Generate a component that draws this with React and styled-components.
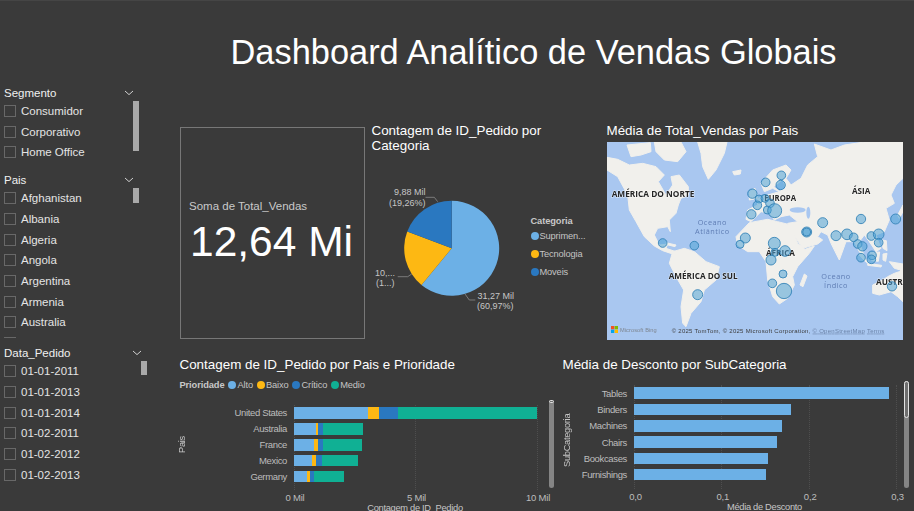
import React from "react";
import styled, { createGlobalStyle } from "styled-components";

const BLUE = "#6cb0e6";
const YELLOW = "#fdb813";
const NAVY = "#2a78c0";
const TEAL = "#10b094";

const GlobalStyle = createGlobalStyle`
  html, body {
    margin: 0;
    padding: 0;
    background: #3a3a3a;
  }
  * {
    box-sizing: border-box;
  }
  body, text {
    font-family: "Liberation Sans", Arial, sans-serif;
  }
`;

const Page = styled.div`
  width: 914px;
  height: 511px;
  overflow: hidden;
  background: #3a3a3a;
  border-top: 1px solid #454545;
  display: grid;
  grid-template-columns: 170px 1fr;
`;

/* ---- slicers ---- */
const Sidebar = styled.aside`
  padding: 82.5px 0 0 4px;
  display: flex;
  flex-direction: column;
`;

const SlicerBox = styled.section`
  position: relative;
  width: ${(p) => p.$width}px;
  margin-bottom: ${(p) => p.$gap}px;
`;

const SlicerHead = styled.div`
  height: 18.5px;
  margin-bottom: -1.4px;
  display: flex;
  align-items: center;
  justify-content: space-between;
  font-size: 11.5px;
  color: #f0f0f0;
  padding-right: 5px;
`;

const SlicerList = styled.div`
  height: ${(p) => p.$height}px;
  overflow: hidden;
`;

const SlicerItem = styled.div`
  height: 20.7px;
  display: flex;
  align-items: center;
  gap: 5px;
  font-size: 11.5px;
  color: #e4e4e4;
`;

const Check = styled.span`
  width: 12px;
  height: 12px;
  border: 1px solid #686868;
  flex: none;
`;

const SlicerScroll = styled.div`
  position: absolute;
  right: 0;
  top: ${(p) => p.$top}px;
  width: 6px;
  height: ${(p) => p.$height}px;
  background: #a9a9a9;
`;

const Slicer = ({ title, items, width, gap, listHeight, thumbTop, thumbHeight }) => (
  <SlicerBox $width={width} $gap={gap}>
    <SlicerHead>
      {title}
      <svg width="10" height="6" viewBox="0 0 10 6">
        <path d="M1 1 L5 4.6 L9 1" fill="none" stroke="#d0d0d0" strokeWidth="1" />
      </svg>
    </SlicerHead>
    <SlicerList $height={listHeight}>
      {items.map((item, i) => (
        <SlicerItem key={i}>
          <Check />
          {item}
        </SlicerItem>
      ))}
    </SlicerList>
    <SlicerScroll $top={thumbTop} $height={thumbHeight} />
  </SlicerBox>
);

/* ---- main column ---- */
const Main = styled.main`
  display: flex;
  flex-direction: column;
  padding-left: 9.5px;
`;

const Header = styled.header`
  height: 122px;
  padding: 32px 0 0 51px;
`;

const PageTitle = styled.h1`
  margin: 0;
  font-size: 34.4px;
  line-height: 38px;
  font-weight: 400;
  color: #fff;
  white-space: nowrap;
`;

const TopRow = styled.div`
  height: 217px;
  display: grid;
  grid-template-columns: 185px 228px 296px;
  column-gap: 7px;
  margin-bottom: 17px;
`;

const BottomRow = styled.div`
  display: grid;
  grid-template-columns: 383px 1fr;
`;

const CardTitle = styled.h2`
  margin: 0;
  font-size: 13.4px;
  line-height: 15px;
  font-weight: 400;
  color: #fff;
  white-space: nowrap;
`;

const KpiCard = styled.div`
  margin-top: 4px;
  height: 212px;
  border: 1px solid #777;
  padding: 71px 0 0 8.5px;
`;

const KpiLabel = styled.div`
  font-size: 11.5px;
  line-height: 14px;
  color: #c9c9c9;
`;

const KpiValue = styled.div`
  margin: 4px 0 0 1px;
  font-size: 42.5px;
  line-height: 50px;
  color: #fff;
  white-space: nowrap;
`;

const PieCard = styled.div`
  display: flex;
  flex-direction: column;
`;

const PieRow = styled.div`
  display: flex;
`;

const PieLegend = styled.div`
  margin: 62px 0 0 4px;
  display: flex;
  flex-direction: column;
  gap: 6px;
`;

const LegendTitle = styled.div`
  margin-bottom: ${(p) => p.$under || 0}px;
  font-size: 9.3px;
  line-height: 12px;
  font-weight: 700;
  color: #c8c8c8;
  white-space: nowrap;
  letter-spacing: -0.1px;
`;

const LegendItem = styled.div`
  display: flex;
  align-items: center;
  gap: 1px;
  font-size: 9.3px;
  line-height: 12px;
  color: #c4c4c4;
  white-space: nowrap;
  letter-spacing: -0.15px;
`;

const Dot = styled.span`
  width: 8px;
  height: 8px;
  border-radius: 50%;
  background: ${(p) => p.$color};
  flex: none;
`;

const PieText = styled.text`
  font-size: 9px;
  fill: #c6c6c6;
`;

const MapCard = styled.div`
  display: flex;
  flex-direction: column;
  gap: 3.5px;
`;

const MapFrame = styled.svg`
  display: block;
  width: 296px;
  height: 198px;
  filter: blur(0.35px);
`;

const PlaceLabel = styled.text`
  font-family: "Open Sans", sans-serif;
  font-weight: 700;
  font-size: 25px;
  fill: #262626;
  stroke: #fff;
  stroke-width: 3px;
  stroke-opacity: 0.6;
  paint-order: stroke;
`;

const OceanLabel = styled.text`
  font-family: "Open Sans", sans-serif;
  font-size: 22px;
  letter-spacing: 1.5px;
  fill: #5f7db4;
  text-anchor: middle;
`;

const Credit = styled.text`
  font-size: 18px;
  fill: #3c3c3c;
`;

const BingMark = styled.text`
  font-size: 17px;
  fill: #7d8590;
`;

const CreditLink = styled.tspan`
  fill: #6b83a8;
  text-decoration: underline;
`;

/* ---- bar charts ---- */
const ChartCard = styled.section`
  position: relative;
  height: 156px;
`;

const ChartLegend = styled.div`
  margin-top: 6px;
  height: 14px;
  display: flex;
  align-items: center;
  gap: 4px;
`;

const ChartBody = styled.div`
  margin-top: ${(p) => p.$top}px;
  display: flex;
`;

const AxisTitle = styled.div`
  writing-mode: vertical-rl;
  transform: rotate(180deg);
  align-self: flex-start;
  height: ${(p) => p.$height}px;
  margin-left: ${(p) => p.$left}px;
  width: 10px;
  text-align: center;
  font-size: 9.3px;
  line-height: 10px;
  color: #c6c6c6;
  white-space: nowrap;
  letter-spacing: -0.3px;
`;

const Labels = styled.div`
  width: ${(p) => p.$width}px;
  margin-right: 6.5px;
`;

const BarLabel = styled.div`
  height: ${(p) => p.$pitch}px;
  display: flex;
  align-items: center;
  justify-content: flex-end;
  font-size: 9.5px;
  letter-spacing: -0.35px;
  color: #bdbdbd;
  white-space: nowrap;
`;

const Plot = styled.div`
  position: relative;
  width: ${(p) => p.$width}px;
`;

const GridLine = styled.span`
  position: absolute;
  top: 0;
  bottom: 24px;
  width: 0;
  border-left: 1px dotted #4e4e4e;
`;

const BarRow = styled.div`
  position: relative;
  height: ${(p) => p.$pitch}px;
  display: flex;
  align-items: center;
`;

const Segment = styled.span`
  height: 11.6px;
  background: ${(p) => p.$color};
`;

const Ticks = styled.div`
  margin: ${(p) => p.$top}px -${(p) => p.$shift}px 0 ${(p) => p.$shift}px;
  display: flex;
  justify-content: space-between;
`;

const Tick = styled.span`
  width: 0;
  display: flex;
  justify-content: center;
  font-size: 9.5px;
  line-height: 12px;
  letter-spacing: -0.2px;
  color: #bdbdbd;
  white-space: nowrap;
`;

const ValueTitle = styled.div`
  margin-top: -1.5px;
  text-align: center;
  font-size: 9.3px;
  line-height: 11px;
  letter-spacing: -0.3px;
  color: #c6c6c6;
  white-space: nowrap;
`;

const ChartScroll = styled.div`
  position: absolute;
  right: ${(p) => p.$right}px;
  top: ${(p) => p.$top}px;
  width: 5px;
  height: ${(p) => p.$height}px;
  border-radius: 3px;
  background: #858585;
`;

const ScrollThumb = styled.div`
  height: ${(p) => p.$height}px;
  border: 1px solid #e2e2e2;
  border-radius: 3px;
  background: #6f6f6f;
`;

const slices = [
  { share: 60.97, color: BLUE },
  { share: 19.77, color: YELLOW },
  { share: 19.26, color: NAVY },
];

const polar = (deg, r = 47.5) => [
  450.7 + r * Math.sin((deg * Math.PI) / 180),
  248.3 - r * Math.cos((deg * Math.PI) / 180),
];

const PieChart = () => {
  let from = 0;
  return (
    <svg width="155" height="187" viewBox="371 153 155 187">
      {slices.map((s) => {
        const to = from + s.share * 3.6;
        const [x1, y1] = polar(from);
        const [x2, y2] = polar(to);
        const large = to - from > 180 ? 1 : 0;
        from = to;
        return (
          <path
            key={s.color}
            d={`M450.7 248.3 L${x1} ${y1} A47.5 47.5 0 ${large} 1 ${x2} ${y2} Z`}
            fill={s.color}
          />
        );
      })}
      <g fill="none" stroke="#8a8a8a" strokeWidth="0.8">
        <path d="M424.5 197.3 H433.3 L436.7 201.7" />
        <path d="M396.7 276.7 H406.7 L410.7 274" />
        <path d="M464 294 L468.3 300 H474.3" />
      </g>
      <PieText x="393" y="195">9,88 Mil</PieText>
      <PieText x="388" y="205.5">(19,26%)</PieText>
      <PieText x="374" y="275.5">10,...</PieText>
      <PieText x="375" y="286">(1...)</PieText>
      <PieText x="476.5" y="298.5">31,27 Mil</PieText>
      <PieText x="476" y="308.5">(60,97%)</PieText>
    </svg>
  );
};

const bubbles = [
  [541, 166, 13], [494, 187, 13], [539, 195, 14], [454, 221, 14], [474, 237, 12], [492, 235, 12],
  [507, 250, 13], [469, 256, 13], [499, 270, 12], [521, 272, 21], [451, 283, 14], [665, 308, 15],
  [617, 336, 15], [617, 336, 12], [780, 297, 14], [884, 297, 15], [705, 347, 15], [738, 343, 16],
  [758, 352, 13], [811, 348, 13], [833, 343, 16], [833, 368, 13], [770, 372, 13], [784, 379, 14],
  [433, 354, 15], [417, 373, 12], [185, 369, 13], [280, 377, 13], [520, 370, 18], [522, 397, 12],
  [552, 393, 16], [510, 420, 15], [780, 413, 13], [813, 406, 13], [811, 418, 13], [546, 462, 12],
  [514, 490, 13], [549, 513, 23], [290, 524, 15], [873, 499, 14],
];

const land = [
  // America do Norte
  "M18 112 L50 118 L85 135 L125 130 L165 140 L190 165 L172 185 L195 225 L215 195 L210 170 L235 165 L262 200 L262 225 L240 235 L232 255 L225 280 L205 300 L208 335 L200 320 L170 325 L160 345 L175 375 L200 372 L195 385 L225 395 L215 402 L185 392 L160 378 L130 350 L105 305 L85 270 L80 225 L50 170 L18 150 Z",
  "M78 75 L148 68 L150 95 L120 105 L90 110 Z",
  "M160 66 L240 66 L255 95 L230 125 L190 120 L165 95 Z",
  "M195 368 L225 375 L222 380 L198 374 Z",
  // Groenlandia e Islandia
  "M290 66 L378 66 L370 100 L345 150 L322 178 L305 140 L300 100 Z",
  "M395 155 L420 150 L418 162 L400 165 Z",
  // America do Sul
  "M215 395 L250 385 L280 395 L315 425 L355 440 L345 480 L310 510 L300 545 L270 580 L255 620 L245 610 L240 560 L248 510 L225 470 L205 430 Z",
  // Africa
  "M405 350 L410 375 L440 395 L475 395 L495 425 L500 480 L515 530 L535 552 L560 535 L580 495 L575 470 L590 440 L625 400 L640 378 L612 388 L590 370 L570 315 L530 305 L500 298 L445 308 Z",
  "M610 462 L618 468 L606 500 L597 495 Z",
  // Eurasia
  "M906 66 L906 175 L885 195 L870 225 L880 250 L855 265 L865 300 L850 335 L825 345 L840 385 L825 395 L805 365 L790 345 L775 365 L790 410 L775 395 L760 365 L735 365 L715 420 L690 370 L680 345 L660 335 L650 350 L665 360 L650 372 L605 385 L575 340 L560 310 L590 305 L565 285 L540 290 L520 300 L505 280 L480 275 L450 305 L435 298 L440 270 L470 255 L470 235 L500 225 L535 215 L515 205 L490 215 L480 190 L515 150 L555 135 L570 150 L555 175 L570 195 L600 175 L620 135 L650 110 L640 72 L690 90 L730 75 L790 66 Z",
  "M445 215 L462 205 L470 235 L445 240 Z",
  // Ilhas da Asia
  "M890 285 L906 255 L906 275 L895 295 Z",
  "M778 398 L803 425 L797 428 L775 405 Z",
  "M808 398 L836 396 L832 424 L812 422 Z",
  "M800 430 L842 436 L840 441 L800 436 Z",
  "M846 402 L858 400 L854 424 L846 420 Z",
  "M842 360 L856 362 L858 392 L846 385 Z",
  "M865 425 L906 432 L906 452 L880 445 Z",
  // Australia
  "M906 445 L895 455 L880 460 L860 470 L845 480 L815 495 L815 520 L835 525 L870 515 L890 530 L906 545 Z",
];

const WorldMap = () => (
  <MapFrame viewBox="18 66 888 594">
    <rect x="18" y="66" width="888" height="594" fill="#a9c7f0" />
    {land.map((d) => (
      <path key={d} d={d} fill="#f1f0ec" stroke="#f1f0ec" strokeWidth="3" strokeLinejoin="round" />
    ))}
    <ellipse cx="590" cy="270" rx="24" ry="8" fill="#a9c7f0" />
    <ellipse cx="622" cy="278" rx="6" ry="18" fill="#a9c7f0" />
    <path d="M520 200 L545 180 L552 205 L535 212 Z" fill="#a9c7f0" />

    <PlaceLabel x="32" y="231" textLength="248" lengthAdjust="spacingAndGlyphs">AMÉRICA DO NORTE</PlaceLabel>
    <PlaceLabel x="203" y="476" textLength="207" lengthAdjust="spacingAndGlyphs">AMÉRICA DO SUL</PlaceLabel>
    <PlaceLabel x="490" y="243" textLength="95" lengthAdjust="spacingAndGlyphs">EUROPA</PlaceLabel>
    <PlaceLabel x="753" y="222" textLength="55" lengthAdjust="spacingAndGlyphs">ÁSIA</PlaceLabel>
    <PlaceLabel x="495" y="407" textLength="87" lengthAdjust="spacingAndGlyphs">ÁFRICA</PlaceLabel>
    <PlaceLabel x="825" y="494" textLength="80" lengthAdjust="spacingAndGlyphs">AUSTR</PlaceLabel>
    <OceanLabel x="334" y="315">Oceano</OceanLabel>
    <OceanLabel x="334" y="341">Atlântico</OceanLabel>
    <OceanLabel x="705" y="478">Oceano</OceanLabel>
    <OceanLabel x="705" y="504">Índico</OceanLabel>

    {bubbles.map(([cx, cy, r], i) => (
      <circle key={i} cx={cx} cy={cy} r={r} fill="#4ea3d6" fillOpacity="0.55" stroke="#2f7fb4" strokeWidth="2.5" />
    ))}

    <rect x="30" y="618" width="10" height="10" fill="#f25022" />
    <rect x="41" y="618" width="10" height="10" fill="#7fba00" />
    <rect x="30" y="629" width="10" height="10" fill="#00a4ef" />
    <rect x="41" y="629" width="10" height="10" fill="#ffb900" />
    <BingMark x="57" y="635" textLength="110">Microsoft Bing</BingMark>
    <Credit x="212" y="638" textLength="638">
      © 2025 TomTom, © 2025 Microsoft Corporation, <CreditLink>© OpenStreetMap</CreditLink>   <CreditLink>Terms</CreditLink>
    </Credit>
  </MapFrame>
);

const BarChart = ({ axis, axisHeight, axisLeft, value, rows, labelWidth, plotWidth, pitch, ticks, ticksTop, ticksShift, gridAt }) => (
  <>
    <AxisTitle $height={axisHeight} $left={axisLeft}>{axis}</AxisTitle>
    <Labels $width={labelWidth}>
      {rows.map((r) => (
        <BarLabel key={r.name} $pitch={pitch}>{r.name}</BarLabel>
      ))}
    </Labels>
    <Plot $width={plotWidth}>
      {gridAt.map((x) => (
        <GridLine key={x} style={{ left: x }} />
      ))}
      {rows.map((r) => (
        <BarRow key={r.name} $pitch={pitch}>
          {r.parts.map(([w, color], i) => (
            <Segment key={i} $color={color} style={{ width: w }} />
          ))}
        </BarRow>
      ))}
      <Ticks $top={ticksTop} $shift={ticksShift}>
        {ticks.map((t) => (
          <Tick key={t}>{t}</Tick>
        ))}
      </Ticks>
      <ValueTitle>{value}</ValueTitle>
    </Plot>
  </>
);

const priorityRows = [
  { name: "United States", parts: [[74.7, BLUE], [10.7, YELLOW], [19, NAVY], [139, TEAL]] },
  { name: "Australia", parts: [[22, BLUE], [2.7, YELLOW], [5.3, NAVY], [39.3, TEAL]] },
  { name: "France", parts: [[20, BLUE], [4, YELLOW], [5.3, NAVY], [39.3, TEAL]] },
  { name: "Mexico", parts: [[18.7, BLUE], [3.7, YELLOW], [5.7, NAVY], [36.3, TEAL]] },
  { name: "Germany", parts: [[13.3, BLUE], [3, YELLOW], [4.3, NAVY], [29.7, TEAL]] },
];

const discountRows = [
  { name: "Tables", parts: [[255, BLUE]] },
  { name: "Binders", parts: [[157, BLUE]] },
  { name: "Machines", parts: [[148.7, BLUE]] },
  { name: "Chairs", parts: [[143, BLUE]] },
  { name: "Bookcases", parts: [[134.7, BLUE]] },
  { name: "Furnishings", parts: [[132.7, BLUE]] },
];

export default function App() {
  return (
    <Page>
      <GlobalStyle />
      <Sidebar>
        <Slicer
          title="Segmento"
          items={["Consumidor", "Corporativo", "Home Office"]}
          width={135}
          gap={8.15}
          listHeight={62}
          thumbTop={17.5}
          thumbHeight={50}
        />
        <Slicer
          title="Pais"
          items={["Afghanistan", "Albania", "Algeria", "Angola", "Argentina", "Armenia", "Australia", ""]}
          width={135}
          gap={5.9}
          listHeight={150}
          thumbTop={17.25}
          thumbHeight={15}
        />
        <Slicer
          title="Data_Pedido"
          items={["01-01-2011", "01-01-2013", "01-01-2014", "01-02-2011", "01-02-2012", "01-02-2013"]}
          width={143}
          gap={0}
          listHeight={130}
          thumbTop={17}
          thumbHeight={14}
        />
      </Sidebar>

      <Main>
        <Header>
          <PageTitle>Dashboard Analítico de Vendas Globais</PageTitle>
        </Header>

        <TopRow>
          <KpiCard>
            <KpiLabel>Soma de Total_Vendas</KpiLabel>
            <KpiValue>12,64 Mi</KpiValue>
          </KpiCard>

          <PieCard>
            <CardTitle>
              Contagem de ID_Pedido por
              <br />
              Categoria
            </CardTitle>
            <PieRow>
              <PieChart />
              <PieLegend>
                <LegendTitle $under={-3}>Categoria</LegendTitle>
                <LegendItem><Dot $color={BLUE} />Suprimen...</LegendItem>
                <LegendItem><Dot $color={YELLOW} />Tecnologia</LegendItem>
                <LegendItem><Dot $color={NAVY} />Moveis</LegendItem>
              </PieLegend>
            </PieRow>
          </PieCard>

          <MapCard>
            <CardTitle>Média de Total_Vendas por Pais</CardTitle>
            <WorldMap />
          </MapCard>
        </TopRow>

        <BottomRow>
          <ChartCard>
            <CardTitle>Contagem de ID_Pedido por Pais e Prioridade</CardTitle>
            <ChartLegend>
              <LegendTitle>Prioridade</LegendTitle>
              <LegendItem><Dot $color={BLUE} />Alto</LegendItem>
              <LegendItem><Dot $color={YELLOW} />Baixo</LegendItem>
              <LegendItem><Dot $color={NAVY} />Crítico</LegendItem>
              <LegendItem><Dot $color={TEAL} />Medio</LegendItem>
            </ChartLegend>
            <ChartBody $top={13}>
              <BarChart
                axis="Pais"
                axisHeight={80}
                axisLeft={-3}
                value="Contagem de ID_Pedido"
                rows={priorityRows}
                labelWidth={100.5}
                plotWidth={243}
                pitch={15.9}
                ticks={["0 Mil", "5 Mil", "10 Mil"]}
                ticksTop={7.7}
                ticksShift={1.5}
                gridAt={[0, 121, 243]}
              />
            </ChartBody>
            <ChartScroll $right={8.5} $top={43} $height={88}>
              <ScrollThumb $height={3} />
            </ChartScroll>
          </ChartCard>

          <ChartCard>
            <CardTitle>Média de Desconto por SubCategoria</CardTitle>
            <ChartBody $top={13}>
              <BarChart
                axis="SubCategoria"
                axisHeight={110}
                axisLeft={-0.5}
                value="Média de Desconto"
                rows={discountRows}
                labelWidth={55}
                plotWidth={262}
                pitch={16.3}
                ticks={["0,0", "0,1", "0,2", "0,3"]}
                ticksTop={8.7}
                ticksShift={2}
                gridAt={[0, 87, 175, 262]}
              />
            </ChartBody>
            <ChartScroll $right={5} $top={24} $height={107}>
              <ScrollThumb $height={37} />
            </ChartScroll>
          </ChartCard>
        </BottomRow>
      </Main>
    </Page>
  );
}
